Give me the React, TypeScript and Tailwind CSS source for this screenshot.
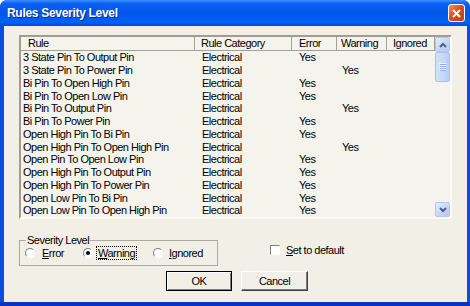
import React from 'react';

const rules: { rule: string; level: 'error' | 'warning' }[] = [
  { rule: '3 State Pin To Output Pin', level: 'error' },
  { rule: '3 State Pin To Power Pin', level: 'warning' },
  { rule: 'Bi Pin To Open High Pin', level: 'error' },
  { rule: 'Bi Pin To Open Low Pin', level: 'error' },
  { rule: 'Bi Pin To Output Pin', level: 'warning' },
  { rule: 'Bi Pin To Power Pin', level: 'error' },
  { rule: 'Open High Pin To Bi Pin', level: 'error' },
  { rule: 'Open High Pin To Open High Pin', level: 'warning' },
  { rule: 'Open Pin To Open Low Pin', level: 'error' },
  { rule: 'Open High Pin To Output Pin', level: 'error' },
  { rule: 'Open High Pin To Power Pin', level: 'error' },
  { rule: 'Open Low Pin To Bi Pin', level: 'error' },
  { rule: 'Open Low Pin To Open High Pin', level: 'error' },
];

const Radio = ({ checked }: { checked?: boolean }) => (
  <span className="flex h-[10px] w-[10px] shrink-0 items-center justify-center rounded-full border border-t-[#808080] border-l-[#808080] border-r-white border-b-white bg-white">
    {checked && <span className="h-[4px] w-[4px] rounded-full bg-black" />}
  </span>
);

const ScrollButton = ({ up }: { up?: boolean }) => (
  <div className="flex h-[15px] w-[15px] items-center justify-center rounded-[2px] border border-[#B3C6F3] bg-[linear-gradient(135deg,#E3EBFE,#C3D4FB_60%,#B5C9F7)]">
    <svg width="8" height="6" viewBox="0 0 8 6">
      <path
        d={up ? 'M1 5 L4 2 L7 5' : 'M1 1 L4 4 L7 1'}
        fill="none"
        stroke="#4D6185"
        strokeWidth="2"
      />
    </svg>
  </div>
);

const Scrollbar = () => (
  <div className="flex w-[15px] flex-col bg-[#F5F4EF]">
    <ScrollButton up />
    <div className="flex h-[30px] items-center justify-center rounded-[2px] border border-[#A9BFF2] bg-[linear-gradient(90deg,#D4E0FD,#C6D6FC_60%,#B9CCF8)]">
      <svg width="7" height="8" viewBox="0 0 7 8">
        <path d="M0 0.5h7M0 2.5h7M0 4.5h7M0 6.5h7" stroke="#EEF3FE" />
        <path d="M1 1.5h6M1 3.5h6M1 5.5h6M1 7.5h6" stroke="#8FADF0" />
      </svg>
    </div>
    <div className="flex-1" />
    <ScrollButton />
  </div>
);

export default function App() {
  return (
    <div className="flex h-[306px] w-[470px] flex-col overflow-hidden rounded-t-[7px] bg-[#0A4EDC] font-['Liberation_Sans',Arial,sans-serif] text-[11px] tracking-[-0.5px] text-black">
      {/* title bar */}
      <div className="flex h-[26px] shrink-0 items-center justify-between bg-[linear-gradient(180deg,#3D8FFF_0%,#0A60F2_14%,#0057E9_50%,#0062F6_85%,#004BD6_100%)] pl-[7px] pr-[5px]">
        <span className="text-[12px] font-bold tracking-[-0.3px] text-white [text-shadow:1px_1px_0_#0A2A8A]">
          Rules Severity Level
        </span>
        <div className="flex h-[18px] w-[17px] items-center justify-center rounded-[3px] border border-white bg-[linear-gradient(135deg,#F29272,#DA4E25_45%,#C63C14)]">
          <svg width="9" height="9" viewBox="0 0 9 9">
            <path d="M1 1 L8 8 M8 1 L1 8" stroke="#fff" strokeWidth="2" />
          </svg>
        </div>
      </div>

      {/* client area */}
      <div className="ml-[4px] mr-[3px] flex flex-1 flex-col bg-[#F2F0E6] pl-[15px] pt-[9px]">
        {/* list view */}
        <div className="flex h-[184px] w-[433px] border-2 border-t-[#9F9D91] border-l-[#9F9D91] border-r-[#FBFAF6] border-b-[#FBFAF6] bg-[#F4F3EC]">
          <div className="flex w-[414px] flex-col">
            <div className="flex h-[14px] items-center border-b border-[#A3A195] leading-[12px]">
              <div className="h-full w-[174px] border-r border-[#A3A195] pl-[7px] leading-[13px]">Rule</div>
              <div className="h-full w-[97px] border-r border-[#A3A195] pl-[6px] leading-[13px]">Rule Category</div>
              <div className="h-full w-[45px] border-r border-[#A3A195] pl-[7px] leading-[13px]">Error</div>
              <div className="h-full w-[50px] border-r border-[#A3A195] pl-[4px] leading-[13px]">Warning</div>
              <div className="h-full w-[48px] border-r border-[#A3A195] pl-[6px] leading-[13px]">Ignored</div>
            </div>
            {rules.map((r) => (
              <div key={r.rule} className="flex h-[12.75px] items-center whitespace-nowrap leading-[12px]">
                <div className="w-[174px] overflow-hidden pl-[2px]">{r.rule}</div>
                <div className="w-[97px] pl-[7px]">Electrical</div>
                <div className="w-[45px] pl-[7px]">{r.level === 'error' ? 'Yes' : ''}</div>
                <div className="w-[50px] pl-[5px]">{r.level === 'warning' ? 'Yes' : ''}</div>
                <div className="w-[48px]" />
              </div>
            ))}
          </div>
          <Scrollbar />
        </div>

        {/* severity + default */}
        <div className="mt-[15px] flex items-start">
          <fieldset className="h-[32px] w-[199px] border border-[#ADAB9F]">
            <legend className="ml-[6px] h-[12px] px-[1px] leading-[12px]">Severity Level</legend>
            <div className="flex h-[13px] items-center pl-[5px] leading-[12px]">
              <div className="flex w-[58px] items-center">
                <Radio />
                <span className="ml-[7px]">
                  <u>E</u>rror
                </span>
              </div>
              <div className="flex w-[70px] items-center">
                <Radio checked />
                <span className="ml-[3px] border border-dotted border-black px-[1px]">
                  <u>W</u>arning
                </span>
              </div>
              <div className="flex items-center">
                <Radio />
                <span className="ml-[6px]">
                  <u>I</u>gnored
                </span>
              </div>
            </div>
          </fieldset>
          <div className="ml-[52px] mt-[9px] flex h-[13px] items-center">
            <span className="h-[10px] w-[10px] border border-t-[#808080] border-l-[#808080] border-r-white border-b-white bg-white" />
            <span className="ml-[6px] leading-[12px]">
              <u>S</u>et to default
            </span>
          </div>
        </div>

        {/* buttons */}
        <div className="ml-[147px] mt-[5px] flex gap-[9px]">
          <button className="h-[20px] w-[66px] border border-black bg-[#F2F0E6] leading-[12px] shadow-[inset_1px_1px_0_#fff,inset_-1px_-1px_0_#808080]">
            OK
          </button>
          <button className="h-[20px] w-[67px] border border-t-white border-l-white border-r-[#404040] border-b-[#404040] bg-[#F2F0E6] leading-[12px] shadow-[inset_-1px_-1px_0_#808080]">
            Cancel
          </button>
        </div>
      </div>
      <div className="h-[4px] shrink-0 bg-[#0733C6]" />
    </div>
  );
}
